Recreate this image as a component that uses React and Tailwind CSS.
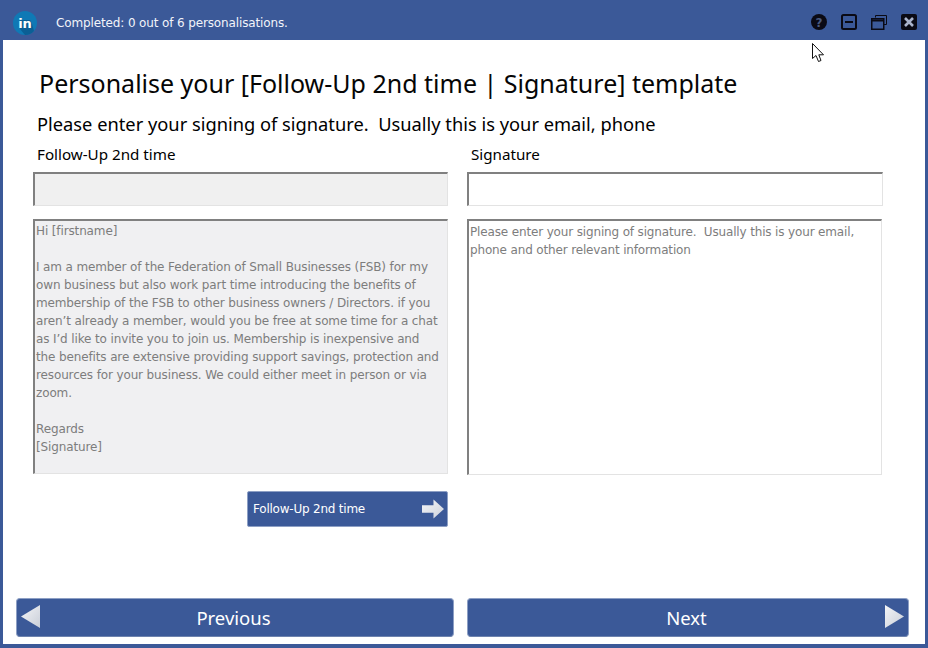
const body = `Hi [firstname]

I am a member of the Federation of Small Businesses (FSB) for my
own business but also work part time introducing the benefits of
membership of the FSB to other business owners / Directors. if you
aren’t already a member, would you be free at some time for a chat
as I’d like to invite you to join us. Membership is inexpensive and
the benefits are extensive providing support savings, protection and
resources for your business. We could either meet in person or via
zoom.

Regards
[Signature]`;

const sig = `Please enter your signing of signature.  Usually this is your email,
phone and other relevant information`;

function Arrow({ dir, w, h }) {
  const id = "g" + dir + w;
  return (
    <svg width={w} height={h} viewBox="0 0 20 24" preserveAspectRatio="none" className="shrink-0">
      <defs>
        <linearGradient id={id} x1="0" y1="0" x2="1" y2="1">
          <stop offset="0" stopColor="#f4f5f7" />
          <stop offset="1" stopColor="#c9ced8" />
        </linearGradient>
      </defs>
      <path d={dir === "left" ? "M20 0V24L0 12Z" : "M0 0V24L20 12Z"} fill={`url(#${id})`} />
    </svg>
  );
}

export default function App() {
  return (
    <div className="relative w-[928px] h-[648px] bg-[#3b5998] flex flex-col overflow-hidden font-['Noto_Sans','DejaVu_Sans',sans-serif]">
      <header className="h-10 shrink-0 flex items-center pl-[13px] pr-[11px] text-white">
        <svg width="24" height="24" viewBox="0 0 24 24" className="shrink-0 mt-[5px]">
          <circle cx="12" cy="12" r="12" fill="#0f79b5" />
          <path d="M7 18 L7 9 L17 9 L19 13 L21 20 A12 12 0 0 1 12 24 Z" fill="#0b5f95" />
          <text x="12" y="16.5" textAnchor="middle" fontSize="13" fontWeight="700" fill="#fff" fontFamily="'DejaVu Sans',sans-serif">in</text>
        </svg>
        <span className="ml-[19px] mt-[5px] text-[12px] font-['DejaVu_Sans',sans-serif] tracking-[-0.13px] text-[#f2f4fa]">
          Completed: 0 out of 6 personalisations.
        </span>
        <div className="ml-auto flex items-center gap-[14px] mt-[4px]">
          <svg width="16" height="16" viewBox="0 0 16 16">
            <circle cx="8" cy="8" r="8" fill="#0a0a14" />
            <text x="8" y="12.5" textAnchor="middle" fontSize="12" fontWeight="700" fill="#4a5a80" fontFamily="'DejaVu Sans',sans-serif">?</text>
          </svg>
          <svg width="16" height="16" viewBox="0 0 16 16">
            <rect x="1" y="1" width="14" height="14" rx="1.5" fill="none" stroke="#0a0a14" strokeWidth="2" />
            <rect x="4" y="7" width="8" height="2" fill="#0a0a14" />
          </svg>
          <svg width="16" height="16" viewBox="0 0 16 16" fill="none" stroke="#0a0a14">
            <path d="M4.5 3.5V1.5H15.5V10.5H13" strokeWidth="1" />
            <rect x="0.75" y="4.75" width="12" height="10.5" strokeWidth="1.5" />
            <path d="M1 6.5H12.5" strokeWidth="2" />
          </svg>
          <svg width="16" height="16" viewBox="0 0 16 16">
            <rect width="16" height="16" rx="2" fill="#0a0a14" />
            <path d="M4 4L12 12M12 4L4 12" stroke="#aab4cc" strokeWidth="2.6" />
          </svg>
        </div>
      </header>

      <main className="relative flex-1 mx-[3px] mb-[4px] bg-white flex flex-col text-black">
        <h1 className="ml-[36px] mt-[25px] text-[25px] leading-[36px] font-normal text-[#050505] whitespace-nowrap">
          Personalise your [Follow-Up 2nd time | Signature] template
        </h1>
        <p className="ml-[34px] mt-[11px] text-[18.3px] leading-[24px] whitespace-pre">
          Please enter your signing of signature.  Usually this is your email, phone
        </p>

        <div className="mt-[9px] ml-[30px] flex gap-[19px] items-start">
          <div className="w-[415px] flex flex-col">
            <label className="ml-[4px] text-[15.2px] leading-[18px] h-[27px]">Follow-Up 2nd time</label>
            <div className="h-[34px] bg-[#f0f0f0] border-t-2 border-l-2 border-t-[#808080] border-l-[#808080] border-b border-r border-b-[#e3e3e3] border-r-[#e3e3e3]" />
            <div className="mt-[13px] h-[255px] bg-[#f0f0f2] border-t-2 border-l-2 border-t-[#808080] border-l-[#808080] border-b border-r border-b-[#e3e3e3] border-r-[#e3e3e3] pl-[1px] pt-[1px] text-[12px] leading-[18px] text-[#7d7d7d] whitespace-pre font-['DejaVu_Sans',sans-serif] tracking-[-0.13px] overflow-hidden">
              {body}
            </div>
            <div className="mt-[17px] flex justify-end">
              <button className="w-[201px] h-[36px] bg-[#3b5998] rounded-[2px] border border-[#8d9fc4] text-white text-[12px] font-['DejaVu_Sans',sans-serif] tracking-[-0.22px] flex items-center justify-between pl-[5px] pr-[3px]">
                <span>Follow-Up 2nd time</span>
                <svg width="22" height="20" viewBox="0 0 23 20">
                  <defs>
                    <linearGradient id="ra" x1="0" y1="0" x2="1" y2="1">
                      <stop offset="0" stopColor="#f4f5f7" />
                      <stop offset="1" stopColor="#cdd2dc" />
                    </linearGradient>
                  </defs>
                  <path d="M0 6H12V0L23 10L12 20V14H0Z" fill="url(#ra)" />
                </svg>
              </button>
            </div>
          </div>

          <div className="w-[416px] flex flex-col">
            <label className="ml-[4px] text-[15.2px] leading-[18px] h-[27px]">Signature</label>
            <div className="h-[34px] bg-white border-t-2 border-l-2 border-t-[#808080] border-l-[#808080] border-b border-r border-b-[#e3e3e3] border-r-[#e3e3e3]" />
            <div className="mt-[13px] h-[256px] w-[415px] bg-white border-t-2 border-l-2 border-t-[#808080] border-l-[#808080] border-b border-r border-b-[#e3e3e3] border-r-[#e3e3e3] pl-[1px] pt-[2px] text-[12px] leading-[18px] text-[#7d7d7d] whitespace-pre font-['DejaVu_Sans',sans-serif] tracking-[-0.15px] overflow-hidden">
              {sig}
            </div>
          </div>
        </div>

        <div className="mt-auto mb-[7px] ml-[13px] flex gap-[13px]">
          <button className="w-[438px] h-[39px] bg-[#3b5998] rounded-[4px] border border-[#8d9fc4] border-b-[#6e83ae] text-white text-[18.5px] relative flex items-center justify-center pr-[3px] pt-[1px]">
            <span className="absolute left-[4px] top-[6px] flex"><Arrow dir="left" w={19} h={23} /></span>
            Previous
          </button>
          <button className="w-[442px] h-[39px] bg-[#3b5998] rounded-[4px] border border-[#8d9fc4] border-b-[#6e83ae] text-white text-[18.5px] relative flex items-center justify-center pr-[3px] pt-[1px]">
            Next
            <span className="absolute right-[4px] top-[6px] flex"><Arrow dir="right" w={19} h={23} /></span>
          </button>
        </div>
      </main>

      <svg width="14" height="21" viewBox="0 0 14 21" className="absolute left-[812px] top-[43px]">
        <path d="M0.5 0.5V15.5L4 12.5L6.5 18.5L9 17.5L6.8 11.8H11.5Z" fill="#fff" stroke="#111" strokeWidth="1" />
      </svg>
    </div>
  );
}
